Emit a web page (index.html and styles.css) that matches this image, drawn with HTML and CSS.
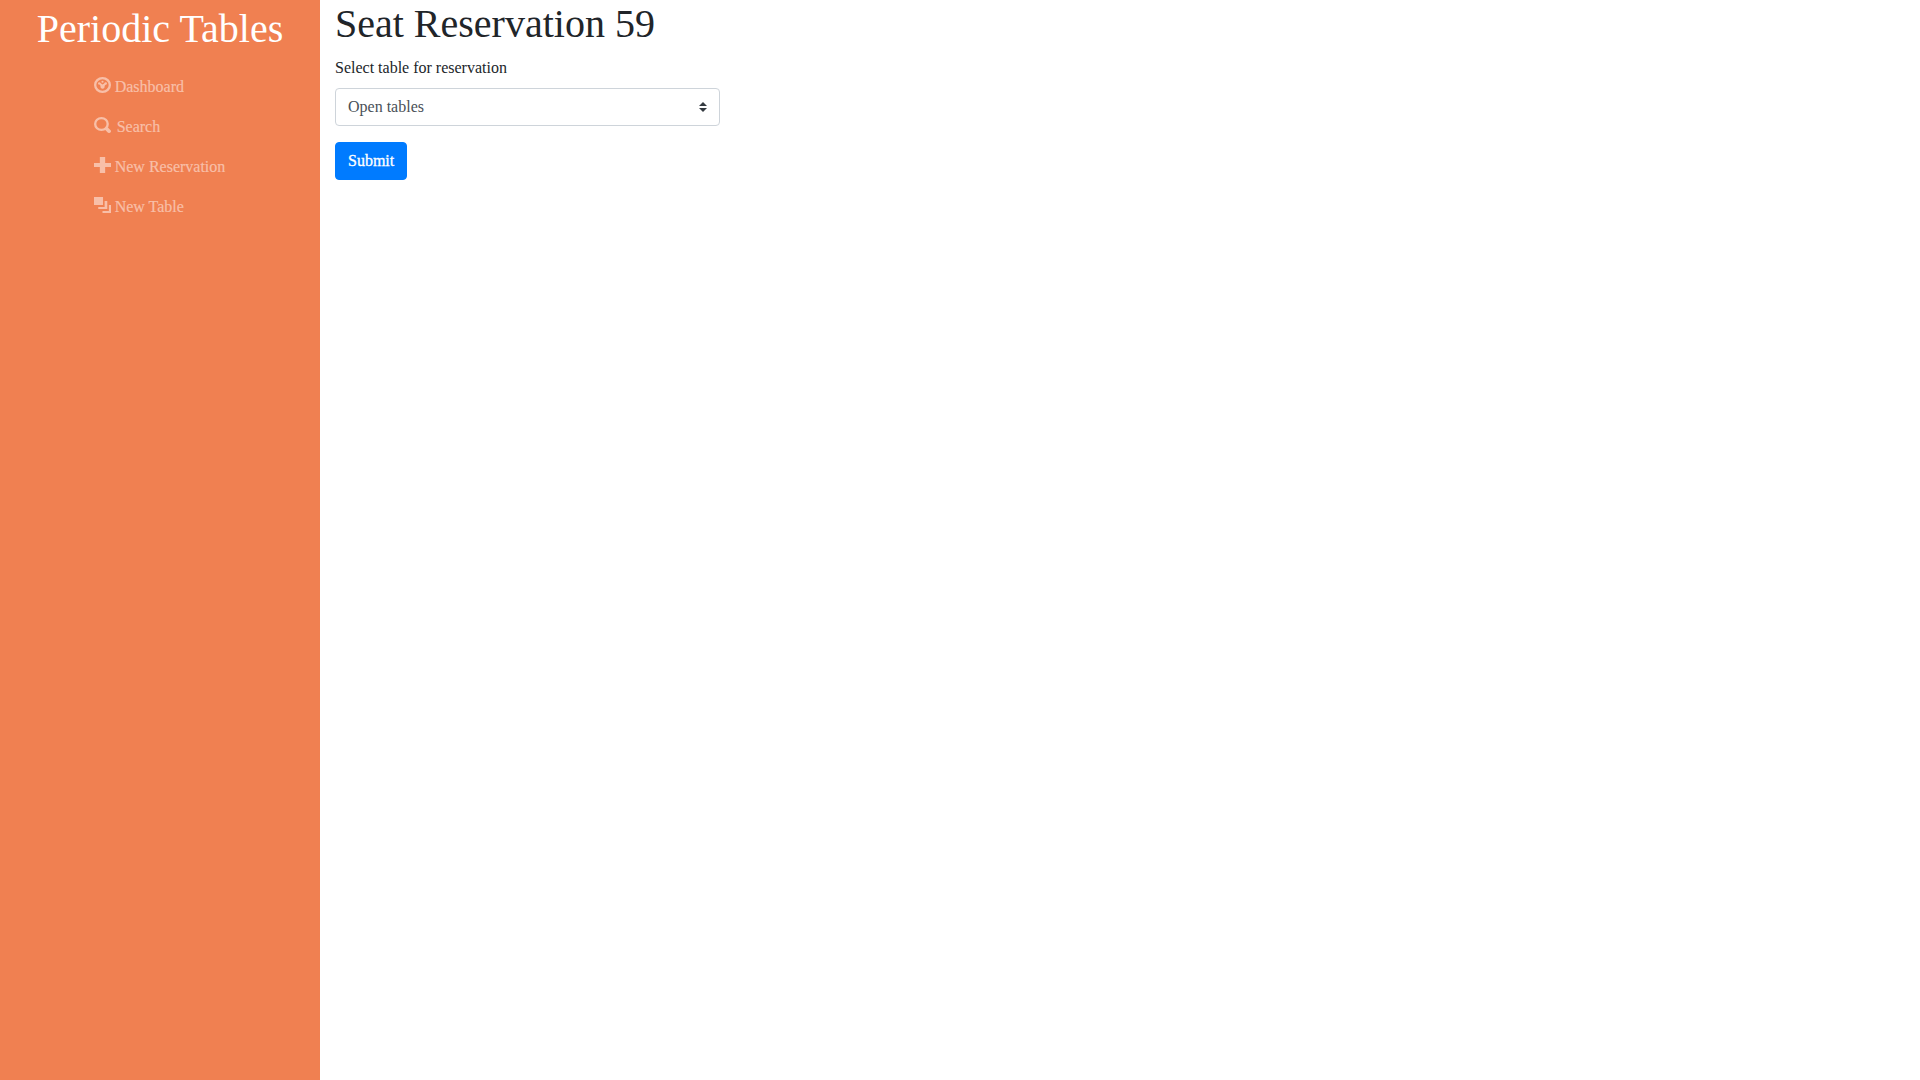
FILE: index.html
```html
<!DOCTYPE html>
<html lang="en">
<head>
<meta charset="utf-8">
<title>Periodic Tables</title>
<link rel="stylesheet" href="styles.css">
</head>
<body>
<div class="layout">
  <nav class="sidebar">
    <a class="brand" href="#">Periodic Tables</a>
    <ul class="menu">
      <li><a href="#"><svg class="icon" viewBox="0 0 16 16" preserveAspectRatio="none"><circle class="ring" cx="8" cy="8" r="6.900"/><circle cx="8" cy="4.700" r="1"/><circle cx="5" cy="6.400" r="1.200"/><circle cx="11" cy="6.400" r="1.200"/><path d="M5 7l1-1 2 1.600L10.500 6l1 1L9.900 9a2 2 0 1 1-3.700 0z"/></svg><span>Dashboard</span></a></li>
      <li><a class="search" href="#"><svg class="icon" viewBox="0 0 16 16" preserveAspectRatio="none"><circle class="ring" cx="7" cy="7" r="5.900"/><path class="handle" d="M11.800 11.800L14.200 14.200"/></svg><span>Search</span></a></li>
      <li><a href="#"><svg class="icon" viewBox="0 0 16 16" preserveAspectRatio="none"><path d="M5.500 0h5v6H16v4h-5.500v6h-5v-6H0V6h5.500z"/></svg><span>New Reservation</span></a></li>
      <li><a href="#"><svg class="icon" viewBox="0 0 16 16" preserveAspectRatio="none"><path d="M0 0h8.500v8H0zM10 4h2.500v8H4v-2h6zM14 8h2v8H8v-2h6z"/></svg><span>New Table</span></a></li>
    </ul>
  </nav>
  <main class="content">
    <h1>Seat Reservation 59</h1>
    <form class="form">
      <label for="table">Select table for reservation</label>
      <div class="select-wrap">
        <select id="table" class="select"><option>Open tables</option></select>
        <svg class="arrows" viewBox="0 0 4 5"><path d="M2 0L0 2h4zm0 5L0 3h4z"/></svg>
      </div>
      <button class="submit" type="button">Submit</button>
    </form>
  </main>
</div>
</body>
</html>
```
FILE: styles.css
```css
* { box-sizing: border-box; }

body {
  margin: 0;
  font: 16px/24px "Liberation Serif", "Times New Roman", serif;
  color: #212529;
  background: #fff;
}

a { color: inherit; text-decoration: none; }

.layout { display: flex; min-height: 100vh; }

.sidebar {
  display: flex;
  flex-direction: column;
  align-items: center;
  width: 320px;
  background: #f08051;
}

.brand {
  margin-top: 5px;
  color: #fff;
  font-size: 40px;
  line-height: 48px;
}

.menu {
  margin: 14px 0 0;
  padding: 0;
  list-style: none;
  color: #f8bfa8;
}

.menu a {
  display: flex;
  gap: 3.5px;
  height: 40px;
  padding-top: 8px;
}

.menu .search { gap: 5.5px; }

.icon {
  width: 17px;
  height: 16px;
  margin: 2px 0 0 -.5px;
  fill: currentColor;
}

.ring { fill: none; stroke: currentColor; stroke-width: 2.2; }

.handle { stroke: currentColor; stroke-width: 3.5; stroke-linecap: round; }

.menu span { -webkit-text-stroke: .2px currentColor; }

.content { flex: 1; padding-left: 15px; }

h1 {
  margin: 0 0 8px;
  font-size: 40px;
  font-weight: 400;
  line-height: 48px;
}

.form {
  display: flex;
  flex-direction: column;
  align-items: flex-start;
}

label { margin-bottom: 8px; }

.select-wrap { position: relative; width: 385px; margin-bottom: 16px; }

.select {
  display: block;
  width: 100%;
  height: 38px;
  padding: 6px 28px 6px 12px;
  appearance: none;
  border: 1px solid #ced4da;
  border-radius: 4px;
  background: #fff;
  color: #495057;
  font: inherit;
}

.arrows {
  position: absolute;
  top: 14px;
  right: 13px;
  width: 8px;
  height: 10px;
  fill: #343a40;
}

.submit {
  height: 38px;
  padding: 6px 12px;
  border: 1px solid #007bff;
  border-radius: 4px;
  background: #007bff;
  color: #fff;
  font: inherit;
  -webkit-text-stroke: .3px #fff;
}
```
